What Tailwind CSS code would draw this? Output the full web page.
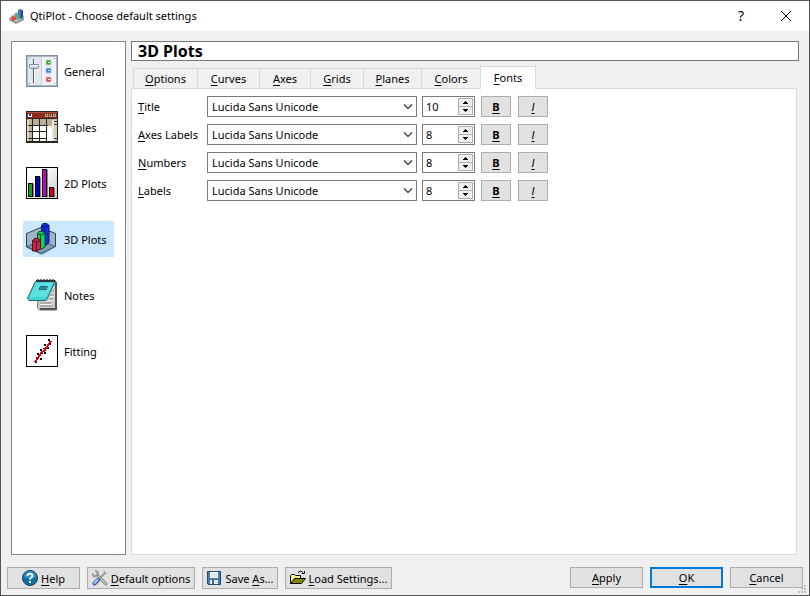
<!DOCTYPE html>
<html lang="en">

<head>
    <meta charset="UTF-8">
    <meta name="viewport" content="width=device-width, initial-scale=1.0">
    <title>QtiPlot - Choose default settings</title>
    <script src="https://cdn.jsdelivr.net/npm/@tailwindcss/browser@4"></script>
</head>

<body class="font-['Noto_Sans',sans-serif] text-[11px] leading-4 text-black">
    <main class="flex h-screen w-full flex-col overflow-hidden border border-[#555] bg-[#f0f0f0]">
        <header class="flex h-[30px] shrink-0 items-center bg-white pl-2 pr-4">
            <svg class="size-4" viewBox="0 0 16 16">
                <path d="M0 10l6-5 3-1 6 4v3l-8 4-7-3z" fill="#b9c1c3" />
                <path d="M0 11l7 3 8-4v2l-8 4-7-4z" fill="#8b9598" />
                <path d="M9 2l2-1 3 1v7l-2 2-3-1z" fill="#3f78a8" />
                <path d="M12 3l2-1v7l-2 2z" fill="#234f7d" />
                <path d="M6 6l2-1 2 1v5l-2 1-2-1z" fill="#62a98b" />
                <path d="M2 9l2-1 3 1v3l-3 1-2-1z" fill="#de5148" />
            </svg>
            <h1 class="ml-[5px] text-[11px]">QtiPlot - Choose default settings</h1>
            <button class="ml-auto w-4 text-sm" aria-label="Help">?</button>
            <button class="ml-[30px] p-px" aria-label="Close">
                <svg class="size-3" viewBox="0 0 12 12" fill="none" stroke="#000"><path d="M1 1l10 10M11 1L1 11" /></svg>
            </button>
        </header>

        <div class="flex min-h-0 flex-1 gap-[5px] pl-2.5 pr-2.5 pt-2.5">
            <nav class="w-[115px] shrink-0 border border-[#828790] bg-white px-[11px] pt-[11px]">
                <ul class="flex flex-col gap-5">
                    <li><a href="#general" class="flex h-9 items-center gap-1.5 px-[3px]">
                        <svg class="size-8" viewBox="0 0 32 32">
                            <rect width="32" height="32" fill="#7e8ba4" />
                            <rect x="1" y="1" width="30" height="30" fill="#aab5c8" />
                            <rect x="2" y="2" width="28" height="28" fill="#e3e8ef" />
                            <rect x="15" y="2" width="15" height="28" fill="#f1f3f7" />
                            <path d="M15.500 2v28" stroke="#c6cdd8" />
                            <path d="M7.500 4v24" stroke="#4c555f" />
                            <path d="M8.500 4v24" stroke="#fff" />
                            <path d="M3.500 9.500h9v3l-1 1h-7l-1-1z" fill="#ccd6e3" stroke="#7c8ba1" />
                            <path d="M4 10.500h8" stroke="#fff" />
                            <path d="M20 5h5v5h-5z" fill="#30a829" stroke="#c2d8c2" />
                            <path d="M20 13h5v5h-5z" fill="#257bd4" stroke="#b6cbe2" />
                            <path d="M20 22h5v5h-5z" fill="#dd414a" stroke="#e3bcc7" />
                            <path d="M22 7.500h2M22 15.500h2M22 24.500h2" stroke="#dff" />
                            <path d="M3 3.500h1M28 3.500h1M3 28.500h1M28 28.500h1" stroke="#788398" />
                        </svg><span class="pt-0.5">General</span></a></li>
                    <li><a href="#tables" class="flex h-9 items-center gap-1.5 px-[3px]">
                        <svg class="size-8" viewBox="0 0 32 32" shape-rendering="crispEdges">
                            <rect width="32" height="32" fill="#27261f" />
                            <rect x="1" y="1" width="30" height="1" fill="#a8553f" />
                            <rect x="1" y="2" width="30" height="5" fill="#962a1a" />
                            <rect x="2" y="3" width="4" height="3" fill="#fff" />
                            <rect x="3" y="3" width="2" height="2" fill="#173b8d" />
                            <path d="M19 3h3v3h-3zM23 3h3v3h-3zM27 3h3v3h-3z" fill="#b6ad96" />
                            <path d="M20 4h1v1h-1zM24 3h1v2h-1zM28 4h1v1h-1z" fill="#222" />
                            <path d="M1 8h30v23H1z" fill="#bab198" />
                            <path d="M1 9h2v22H1z" fill="#e3dfd2" />
                            <path d="M7 15h13v15H7zM21 15h6v15h-6z" fill="#fff" />
                            <path d="M26 9h2v21h-2z" fill="#e9e6dc" />
                            <path d="M28 8h3v23h-3z" fill="#d5cfbf" />
                            <path d="M6 8h1v22H6zM13 8h1v22h-1zM20 8h1v22h-1zM2 14h20v1H2zM2 20h19v1H2zM2 27h19v1H2zM1 30h30v1H1z" fill="#24231d" />
                            <path d="M28 10h3v1h-3zM28 13h3v1h-3zM28 27h3v1h-3z" fill="#444033" />
                        </svg><span class="pt-0.5">Tables</span></a></li>
                    <li><a href="#plots2d" class="flex h-9 items-center gap-1.5 px-[3px]">
                        <svg class="size-8" viewBox="0 0 32 32" shape-rendering="crispEdges">
                            <defs><linearGradient id="plotBg" x2="1" y2="1"><stop offset=".3" stop-color="#fff" /><stop offset="1" stop-color="#c8c8c8" /></linearGradient></defs>
                            <rect width="32" height="32" fill="#000" />
                            <rect x="1" y="1" width="30" height="30" fill="url(#plotBg)" />
                            <path d="M7 17h1v13H7zM14 10h1v20h-1zM21 3h1v27h-1zM28 21h1v9h-1z" fill="#888" />
                            <path d="M2 16h5v14H2zM9 9h5v21H9zM16 2h5v28h-5zM23 20h5v10h-5z" fill="#000" />
                            <path d="M3 17h3v12H3z" fill="#0aa80a" />
                            <path d="M10 10h3v19h-3z" fill="#0000c0" />
                            <path d="M17 3h3v26h-3z" fill="#b80ab8" />
                            <path d="M24 21h3v8h-3z" fill="#d80000" />
                        </svg><span class="pt-0.5">2D Plots</span></a></li>
                    <li><a href="#plots3d" aria-current="page" class="flex h-9 items-center gap-1.5 bg-[#cce8ff] px-[3px]">
                        <svg class="size-8" viewBox="0 0 32 32">
                            <path d="M.5 10.500L15 4.500l14.500 6v13L15.500 31 .5 24z" fill="#9fb4c8" stroke="#2b4254" />
                            <path d="M1 23.500l14-6 14 6-13.500 7z" fill="#7f9ab1" stroke="#4a6377" />
                            <path d="M15.500 2.500l1.500-2h4l2 2v17l-3 3h-4.500z" fill="#0c2ce0" stroke="#08186a" />
                            <path d="M15.500 2.500l3 1.500 4.500-1.500M18.500 4v17" stroke="#08186a" fill="none" />
                            <path d="M11.500 10.500l1.500-2h4l2 2v13l-3 2.500h-4.500z" fill="#12cf55" stroke="#064a24" />
                            <path d="M11.500 10.500l3 1.500 4.500-1.500M14.500 12v13" stroke="#064a24" fill="none" />
                            <path d="M6.500 17.500l2-2h4l2 2v8l-3 2.500h-5z" fill="#c42a48" stroke="#5a1021" />
                            <path d="M6.500 17.500l3.500 1.500 4.500-1.500M10.500 19v9" stroke="#5a1021" fill="none" />
                        </svg><span class="pt-0.5">3D Plots</span></a></li>
                    <li><a href="#notes" class="flex h-9 items-center gap-1.5 px-[3px]">
                        <svg class="size-8" viewBox="0 0 32 32">
                            <path d="M12.500 6h18v25h-17l-2-2z" fill="#cfcfcf" stroke="#777" />
                            <path d="M29 3h2v28H14v-2h15z" fill="#555" />
                            <path d="M14 24h11M14 27h13M23 20h4M24 16h4M26 12h2" stroke="#8c8c8c" />
                            <path d="M14 25.500h12M22 21.500h5M24 17.500h4" stroke="#f4f4f4" />
                            <path d="M9.500 2.500H29L21.500 19l-2 2.500H3L1.500 19z" fill="#43d3d3" stroke="#14696e" />
                            <path d="M10 4h17l-7 14H3.500z" fill="#5fe0e0" />
                            <path d="M14 7h8l-1.500 4h-8z" fill="#176c78" />
                            <path d="M14 9h7" stroke="#4fa9b0" />
                            <path d="M10 2h19.500" stroke="#2d3a3a" stroke-width="2" />
                            <path d="M11 .5h18" stroke="#777" stroke-dasharray="2 1" />
                        </svg><span class="pt-0.5">Notes</span></a></li>
                    <li><a href="#fitting" class="flex h-9 items-center gap-1.5 px-[3px]">
                        <svg class="size-8" viewBox="0 0 32 32" shape-rendering="crispEdges">
                            <path d="M0 0h32v32H0z" />
                            <path d="M1 1h30v30H1z" fill="#fff" />
                            <path d="M9 26h2v2H9zM10 22h2v2h-2zM11 18h2v2h-2zM14 23h2v2h-2zM14 14h2v2h-2zM18 17h2v2h-2zM18 9h2v2h-2zM21 12h2v2h-2zM22 4h2v2h-2zM23 8h2v2h-2z" />
                            <path d="M9 27l3-4 3-5 4-3 3-5 3-4" fill="none" stroke="#e8000c" stroke-width="2" />
                            <path d="M9 27h2v1H9zM15 18h2v1h-2zM17 13h2v1h-2z" />
                        </svg><span class="pt-0.5">Fitting</span></a></li>
                </ul>
            </nav>

            <section class="flex min-w-0 flex-1 flex-col">
                <h2 class="h-5 shrink-0 border border-[#777] bg-white px-1.5 text-base leading-[18px] font-bold">3D Plots</h2>
                <div class="mr-0.5 flex min-h-0 flex-1 flex-col pt-[5px]">
                    <div class="z-10 -mb-px flex shrink-0 items-end pl-0.5" role="tablist">
                        <button role="tab" class="h-[21px] w-[65px] border border-[#d9d9d9]"><u class="underline-offset-2">O</u>ptions</button>
                        <button role="tab" class="h-[21px] w-[62px] border border-l-0 border-[#d9d9d9]"><u class="underline-offset-2">C</u>urves</button>
                        <button role="tab" class="h-[21px] w-[51px] border border-l-0 border-[#d9d9d9]"><u class="underline-offset-2">A</u>xes</button>
                        <button role="tab" class="h-[21px] w-[53px] border border-l-0 border-[#d9d9d9]"><u class="underline-offset-2">G</u>rids</button>
                        <button role="tab" class="h-[21px] w-[58px] border border-l-0 border-[#d9d9d9]"><u class="underline-offset-2">P</u>lanes</button>
                        <button role="tab" class="h-[21px] w-[58px] border border-x-0 border-[#d9d9d9]"><u class="underline-offset-2">C</u>olors</button>
                        <button role="tab" aria-selected="true" class="h-[23px] w-14 border border-b-0 border-[#d9d9d9] bg-white"><u class="underline-offset-2">F</u>onts</button>
                    </div>
                    <div id="fonts" role="tabpanel" class="flex flex-1 flex-col gap-[7px] border border-[#dcdcdc] bg-white px-1.5 pt-[7px]"></div>
                </div>
            </section>
        </div>

        <footer class="flex shrink-0 items-start pb-1.5 pl-1.5 pr-1.5 pt-3">
            <div class="flex gap-[7px]">
                <button class="flex h-[22px] w-[73px] items-center justify-center gap-[3px] border border-[#adadad] bg-[#e1e1e1]">
                    <svg class="size-4" viewBox="0 0 16 16"><circle cx="8" cy="8" r="7.500" fill="#146e9f" stroke="#0a3f62" /><path d="M2 7a6 6 0 0112 0q-6 3-12 0" fill="#3295bd" /><path d="M5.500 6c0-3 5-3 5-.3C10.500 7.500 8 7.500 8 9.500M8 11v2" fill="none" stroke="#fff" stroke-width="1.800" /></svg>
                    <span class="pt-px"><u class="underline-offset-2">H</u>elp</span>
                </button>
                <button class="flex h-[22px] w-[108px] items-center justify-center gap-[3px] border border-[#adadad] bg-[#e1e1e1]">
                    <svg class="size-4" viewBox="0 0 16 16" fill="none" stroke-linecap="round"><path d="M5 5l9 9" stroke="#888" stroke-width="3" /><path d="M5 5l9 9" stroke="#e8e8e8" /><path d="M4 1l2 2-1 3-3 .5L.7 4" stroke="#999" stroke-width="2" /><path d="M13 3L7 9" stroke="#999" stroke-width="2" /><path d="M12 1l3 3" stroke="#aaa" /><path d="M6 10L2.500 13.500" stroke="#3a67a8" stroke-width="4" /><path d="M5.500 10L2.500 13" stroke="#a9c8ee" stroke-width="2" /></svg>
                    <span class="pt-px"><u class="underline-offset-2">D</u>efault options</span>
                </button>
                <button class="flex h-[22px] w-[76px] items-center justify-center gap-[3px] border border-[#adadad] bg-[#e1e1e1]">
                    <svg class="size-4" viewBox="0 0 16 16"><path d="M1.500 1.500h13v13h-12l-1-1z" fill="#477ba3" stroke="#234c6b" /><path d="M4 2h8v6H4z" fill="#f6f8f9" /><path d="M5 4h6M5 6h6" stroke="#c8d2d8" /><path d="M4 10h8v4H4z" fill="#e3e8eb" /><path d="M6 10h2v4H6z" fill="#416780" /></svg>
                    <span class="pt-px">Save <u class="underline-offset-2">A</u>s...</span>
                </button>
                <button class="flex h-[22px] w-[107px] items-center justify-center gap-[3px] border border-[#adadad] bg-[#e1e1e1]">
                    <svg class="size-4" viewBox="0 0 16 16"><path d="M.5 13.500V5.500l1-1h3l1 1h5v3" fill="#f7f784" stroke="#000" /><path d="M.5 13.500l4-5H15.500l-4 5z" fill="#858500" stroke="#000" /><path d="M8 2.500q3-3 5 0M14.500 1v2.500H12" fill="none" stroke="#000" /></svg>
                    <span class="pt-px"><u class="underline-offset-2">L</u>oad Settings...</span>
                </button>
            </div>
            <div class="ml-auto flex gap-[7px]">
                <button class="h-[21px] w-[73px] border border-[#adadad] bg-[#e1e1e1]"><u class="underline-offset-2">A</u>pply</button>
                <button class="h-[21px] w-[73px] border-2 border-[#0078d7] bg-[#e1e1e1] leading-none"><u class="underline-offset-2">O</u>K</button>
                <button class="h-[21px] w-[73px] border border-[#adadad] bg-[#e1e1e1]"><u class="underline-offset-2">C</u>ancel</button>
            </div>
        </footer>
        <svg class="absolute right-1 bottom-[3px] size-2" viewBox="0 0 8 8" fill="#bfbfbf"><path d="M6 0h2v2H6zM3 3h2v2H3zM6 3h2v2H6zM0 6h2v2H0zM3 6h2v2H3zM6 6h2v2H6z" /></svg>
    </main>
    <script>
        const rows = [['Title', 10], ['Axes Labels', 8], ['Numbers', 8], ['Labels', 8]];

        document.getElementById('fonts').innerHTML = rows.map(([label, size], i) => `
            <div class="flex h-[21px] items-center">
                <label for="font${i}" class="w-[69px] shrink-0 whitespace-nowrap"><u class="underline-offset-2">${label[0]}</u>${label.slice(1)}</label>
                <div class="relative h-full w-[210px]">
                    <select id="font${i}" class="h-full w-full appearance-none border border-[#7a7a7a] bg-white pl-1"><option>Lucida Sans Unicode</option></select>
                    <svg class="pointer-events-none absolute top-2 right-1 h-[6px] w-[10px]" viewBox="0 0 10 6" fill="none" stroke="#333" stroke-width="1.200"><path d="M1 .5l4 4 4-4" /></svg>
                </div>
                <div class="ml-[5px] flex h-full w-[53px] border border-[#7a7a7a] bg-white p-px">
                    <input type="text" inputmode="numeric" aria-label="${label} size" value="${size}" class="min-w-0 flex-1 pl-0.5 outline-none">
                    <div class="flex w-[15px] flex-col">
                        <button aria-label="Increase" class="flex flex-1 items-center justify-center border border-[#adadad] bg-[#f0f0f0]"><svg class="h-[3px] w-[5px]" viewBox="0 0 5 3" shape-rendering="crispEdges"><path d="M2 0h1v1h1v1h1v1H0V2h1V1h1z" /></svg></button>
                        <button aria-label="Decrease" class="-mt-px flex flex-1 items-center justify-center border border-[#adadad] bg-[#f0f0f0]"><svg class="h-[3px] w-[5px]" viewBox="0 0 5 3" shape-rendering="crispEdges"><path d="M0 0h5v1H4v1H3v1H2V2H1V1H0z" /></svg></button>
                    </div>
                </div>
                <button class="ml-1.5 h-full w-[30px] border border-[#adadad] bg-[#e1e1e1] font-bold underline underline-offset-2">B</button>
                <button class="ml-[7px] h-full w-[30px] border border-[#adadad] bg-[#e1e1e1] font-['Liberation_Sans',sans-serif] italic underline underline-offset-2">I</button>
            </div>`).join('');
    </script>
</body>

</html>
